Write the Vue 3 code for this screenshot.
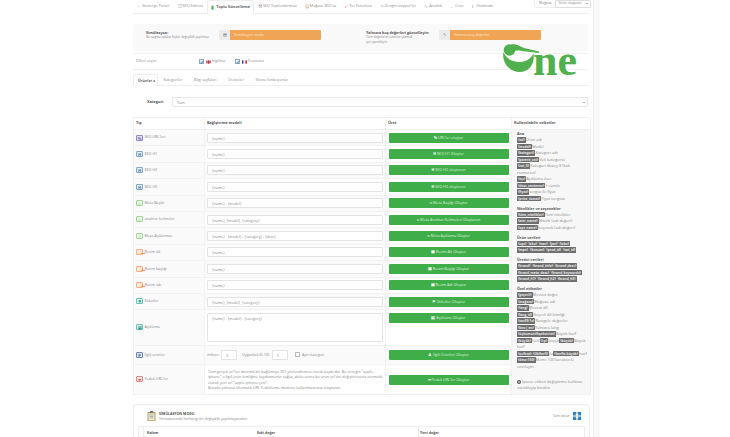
<script setup>
const navs = [
  { label: 'Gösterge Paneli', icon: '◔', color: '#c9a58a' },
  { label: 'SEO Editörü', icon: '☑', color: '#aab' },
  { label: 'Toplu Güncelleme', icon: '▮', color: '#58b050', active: true },
  { label: 'SEO Yapılandırması', icon: '⚒', color: '#999' },
  { label: "Mağaza SEO'su", icon: '▤', color: '#c9a58a' },
  { label: 'Yol Yöneticisi', icon: '➶', color: '#d98' },
  { label: 'Zengin snippet\'ler', icon: '✧', color: '#9ab' },
  { label: 'Analitik', icon: '∿', color: '#9a9' },
  { label: 'Cron', icon: '…', color: '#bbb' },
  { label: 'Hakkında', icon: 'ℹ', color: '#777' }
]
const subTabs = ['Kategoriler', 'Bilgi sayfaları', 'Üreticiler', 'Ekstra fonksiyonlar']
const rows = [
  { type: 'SEO URL\'leri', kind: 'purple', glyph: '%', value: '{name}', btn: "URL'ler oluştur", bi: '%' },
  { type: 'SEO H1', kind: 'blue', glyph: 'H', value: '{name}', btn: 'SEO H1 Oluştur', bi: 'H' },
  { type: 'SEO H2', kind: 'blue', glyph: 'H', value: '{name}', btn: 'SEO H2 oluşturun', bi: 'H' },
  { type: 'SEO H3', kind: 'blue', glyph: 'H', value: '{name}', btn: 'SEO H3 oluşturun', bi: 'H' },
  { type: 'Meta Başlık', kind: 'green', glyph: '‹›', value: '{name} - {model}', btn: 'Meta Başlığı Oluştur', bi: '‹›' },
  { type: 'anahtar kelimeler', kind: 'green', glyph: '‹›', value: '{name}, {model}, {category}', btn: 'Meta Anahtar Kelimeleri Oluşturun', bi: '‹›' },
  { type: 'Meta Açıklaması', kind: 'green', glyph: '‹›', value: '{name} - {model} - {category} - {desc}', btn: 'Meta Açıklama Oluştur', bi: '‹›' },
  { type: 'Resim alt', kind: 'orange', glyph: '▬', value: '{name}', btn: 'Resim Alt Oluştur', bi: '▣' },
  { type: 'Resim başlığı', kind: 'orange', glyph: '▬', value: '{name}', btn: 'Resim Başlığı Oluştur', bi: '▣' },
  { type: 'Resim adı', kind: 'orange', glyph: '▬', value: '{name}', btn: 'Resim Adı Oluştur', bi: '▣' },
  { type: 'Etiketler', kind: 'teal', glyph: '⚑', value: '{name}, {model}, {category}', btn: 'Etiketler Oluştur', bi: '⚑' }
]
const sections = [
  { title: 'Ana', lines: [
    [['{ad}', 'Ürün adı']], [['{model}', 'Model']], [['{kategori}', 'Kategori adı']], [['{parent_cat}', 'Veli kategorisi']],
    [['{cat_X}', 'Kategori düzey X (kök']], [['', 'numarası)']], [['{açı}', 'Açıklama ilacı']], [['{desc_sentence}', '1 cümle']],
    [['{fiyat}', 'vergisi ile fiyat']], [['{price_tomat}', 'Fiyat vergisiz']]
  ] },
  { title: 'Nitelikler ve seçenekler', lines: [
    [['{tüm_nitelikler}', 'Tüm nitelikler']], [['{attr_name}', 'Nitelik (adı değeri)']], [['{opt_name}', 'Seçenek (adı değeri)']]
  ] },
  { title: 'Ürün verileri', lines: [
    [['{upc}', ''], ['{sku}', ''], ['{ean}', ''], ['{jan}', ''], ['{isbn}', '']],
    [['{mpn}', ''], ['{konum}', ''], ['{prod_id}', ''], ['{cat_id}', '']]
  ] },
  { title: 'Üretici verileri', lines: [
    [['{brand}', ''], ['{brand_title}', ''], ['{brand_desc}', '']],
    [['{brand_meta_desc}', ''], ['{brand_keywords}', '']],
    [['{brand_h1}', ''], ['{brand_h2}', ''], ['{brand_h3}', '']]
  ] },
  { title: 'Özel etiketler', lines: [
    [['{geçerli}', 'Mevcut değer']], [['{mağaza}', 'Mağaza adı']], [['{lang}', 'Mevcut dil']], [['{lang_id}', 'Geçerli dil kimliği']],
    [['{sec99:1x}', 'Rastgele değerler']], [['{kes:|:en}', 'Yalnızca lang']], [['{üçkomut:ilkşekstrim}', 'Büyük harf']],
    [['{büyük}', 'harf'], ['{l:p}', 'küçük'], ['{küçük}', 'Büyük']], [['', 'harf']],
    [['{ucfirst}: {ilkHarfi}', 'ile'], ['{harfle-büyük}', 'harf']],
    [['{desc:100}', 'Metni 100 karakterle']], [['', 'sınırlayın']]
  ] }
]
</script>

<template>
  <div class="page">
    <main class="main">
      <nav class="nav">
        <a v-for="n in navs" :key="n.label" class="nav-item" :class="{ active: n.active }">
          <span class="nav-ico" :style="{ color: n.color }">{{ n.icon }}</span>{{ n.label }}
        </a>
      </nav>
      <div class="store">
        <span>Mağaza</span>
        <span class="store-select">Senin mağazan <i class="caret"></i></span>
      </div>

      <section class="panel">
        <div class="opt opt-a">
          <div class="opt-text"><b>Simülasyon:</b><small>Bu sağma ayakta hiçbir değişiklik yapılmaz</small></div>
          <div class="group"><span class="addon">▤</span><span class="orange">Simülasyon modu</span></div>
        </div>
        <div class="opt opt-b">
          <div class="opt-text"><b>Yalnızca boş değerleri güncelleyin:</b><small>Tüm değerlerin üzerine yazmak için işaretleyin</small></div>
          <div class="group"><span class="addon">✎</span><span class="orange">Yalnızca boş değerler</span></div>
        </div>
      </section>

      <div class="langs">
        <span class="langs-label">Dilleri seçin:</span>
        <label class="lang">
          <span class="check">✓</span>
          <svg class="flag" viewBox="0 0 6 4"><rect width="6" height="4" fill="#d9a0ae"/><path d="M0 2h6M3 0v4" stroke="#c8213a" stroke-width="1"/></svg>
          İngilizce
        </label>
        <label class="lang">
          <span class="check">✓</span>
          <svg class="flag" viewBox="0 0 6 4"><rect width="2" height="4" fill="#33509c"/><rect x="2" width="2" height="4" fill="#f4f4f4"/><rect x="4" width="2" height="4" fill="#d8333f"/></svg>
          Fransızca
        </label>
      </div>

      <div class="tabs">
        <a class="tab active">Ürünler s</a>
        <a v-for="t in subTabs" :key="t" class="tab">{{ t }}</a>
      </div>

      <div class="cat">
        <b>Kategori:</b>
        <div class="cat-select">Tüm<i class="caret"></i></div>
      </div>

      <table class="grid">
        <colgroup><col class="c1"><col class="c2"><col class="c3"><col class="c4"></colgroup>
        <thead>
          <tr><th>Tip</th><th>Bağlştırma modeli</th><th>Üret</th><th>Kullanılabilir etiketler</th></tr>
        </thead>
        <tbody>
          <tr v-for="(r, i) in rows" :key="r.type" class="row">
            <td class="type"><span class="ico" :class="r.kind">{{ r.glyph }}</span>{{ r.type }}</td>
            <td><div class="input">{{ r.value }}</div></td>
            <td><button class="gen"><span class="gen-ico">{{ r.bi }}</span> {{ r.btn }}</button></td>
            <td v-if="i === 0" rowspan="14" class="tags">
              <div v-for="s in sections" :key="s.title" class="tag-sec">
                <h5>{{ s.title }}</h5>
                <div v-for="(l, j) in s.lines" :key="j" class="tag-line">
                  <template v-for="(p, k) in l" :key="k">
                    <span v-if="p[0]" class="tag">{{ p[0] }}</span>
                    <span v-if="p[1]"> {{ p[1] }} </span>
                    <span v-else> </span>
                  </template>
                </div>
              </div>
              <p class="tip"><svg class="tip-ico" viewBox="0 0 4 4"><circle cx="2" cy="2" r="2" fill="#555"/><rect x="1.500" y="1" width="1" height="2" fill="#eee"/></svg> İpucu: etiketi değiştirme kalıbına<br>sürükleyip bırakın</p>
            </td>
          </tr>
          <tr class="row-desc">
            <td class="type"><span class="ico teal">▤</span>Açıklama</td>
            <td class="top"><div class="area">{name} - {model} - {category}</div></td>
            <td class="top"><button class="gen"><span class="gen-ico">▤</span> Açıklama Oluştur</button></td>
          </tr>
          <tr class="row-rel">
            <td class="type"><span class="ico navy">P</span>İlgili ürünler</td>
            <td>
              <div class="rel">
                miktar: <span class="mini">5</span>
                <span class="gap">Uygunluk (0-10): </span><span class="mini">5</span>
                <span class="box"></span> Aynı kategori
              </div>
            </td>
            <td><button class="gen"><span class="gen-ico">♟</span> İlgili Ürünleri Oluştur</button></td>
          </tr>
          <tr class="row-fall">
            <td class="type"><span class="ico red">➦</span>Yedek URL'ler</td>
            <td class="note">
              Tüm gerçek url'leri dinamik bir bağlantıya 301 yönlendirmesi olarak kaydedin. Bu örneğin "apple-iphone" u ilgili ürün kimliğine kaydetmenizi sağlar, daha sonra bu ürün url'sini değiştirirseniz otomatik olarak yeni url "apple-iphone-yeni".<br>
              Burada yalnızca Otomatik URL Yedekleme modunu kullanmazsanız oluşturun.
            </td>
            <td><button class="gen"><span class="gen-ico">➦</span> Yedek URL'ler Oluştur</button></td>
          </tr>
        </tbody>
      </table>

      <section class="sim">
        <header class="sim-head">
          <svg class="clip" viewBox="0 0 9 10"><rect x=".5" y="1" width="8" height="9" rx=".6" fill="#b79a63"/><rect x="1.5" y="2.4" width="6" height="6.8" fill="#eef1e6"/><rect x="3" y="0" width="3" height="2" fill="#6f7a5c"/><path d="M2.5 4h4M2.5 5.5h4M2.5 7h4" stroke="#7f8f6a" stroke-width=".6"/></svg>
          <div class="sim-text"><b>SİMÜLASYON MODU</b><small>Veritabanında herhangi bir değişiklik yapılmayacaktır.</small></div>
          <span class="full">Tam ekran</span>
          <svg class="full-ico" viewBox="0 0 8 8" fill="#2f80c0"><path d="M0 0h3.4v1.4L2.4 2.4 3.6 3.6H0zM8 0v3.6H4.4L5.6 2.4 4.6 1.4V0zM0 8V4.4h3.6L2.4 5.6l1 1V8zM8 8H4.6V6.6l1-1L4.4 4.4H8z"/></svg>
        </header>
        <div class="sim-table">
          <span class="sim-first"></span>
          <span class="sim-c1">Kalem</span>
          <span class="sim-c2">Eski değer</span>
          <span class="sim-c3">Yeni değer</span>
        </div>
      </section>

      <div class="logo" aria-label="One">
        <svg class="logo-o" viewBox="0 0 36 28" fill="#4fb04d">
          <circle cx="6.5" cy="6" r="5.8"/>
          <path d="M8 .6C14-.6 17 3 22 4.2L36 7.6V9L23 7.6C18 7 15 6 11.5 7Z"/>
          <path d="M.4 8C-1.400 20 8 28 16.500 28 26 28 32 20 30.500 9.500 28 14 24 18 16.500 18 9 18 3.500 15 .4 8Z"/>
        </svg>
        <span class="logo-t">ne</span>
      </div>
    </main>
    <aside class="gutter"></aside>
  </div>
</template>

<style>
html, body { margin: 0; height: 437px; overflow: hidden; background: #fff; }
</style>

<style scoped>
.page { display: flex; width: 730px; height: 437px; overflow: hidden; padding-left: 125px; box-sizing: border-box; font-family: "Open Sans", "Liberation Sans", sans-serif; font-size: 3.7px; line-height: 6.4px; color: #777; }
.main { position: relative; width: 469px; flex: none; padding: 0 5px 0 8px; box-sizing: border-box; border-right: 1px solid #f0f0f0; }
.gutter { width: 6px; background: #f8f8f8; }

.nav { display: flex; height: 13px; border-bottom: 1px solid #eee; box-sizing: content-box; }
.nav-item { display: flex; align-items: center; padding: 0 4px; white-space: nowrap; font-size: 3.750px; color: #8a8a8a; }
.nav-item.active { font-weight: 700; color: #666; background: #fff; border: 1px solid #eee; border-bottom: 0; border-radius: 3px 3px 0 0; height: 14px; padding: 0 3px; box-sizing: border-box; }
.nav-ico { width: 4px; margin-right: 1px; font-size: 4.500px; overflow: hidden; }

.store { position: absolute; top: 0; right: 2px; width: 57px; height: 8px; display: flex; align-items: center; gap: 3px; padding-left: 4px; box-sizing: border-box; border: 1px solid #eee; border-top: 0; border-right: 0; border-radius: 0 0 0 3px; background: #fff; color: #888; font-size: 3.6px; }
.store-select { flex: 1; height: 6px; line-height: 5px; border: 1px solid #ddd; border-radius: 1px; padding-left: 3px; position: relative; font-size: 3.2px; }

.caret { position: absolute; right: 2px; top: 2px; border: 1.300px solid transparent; border-top-color: #666; border-bottom: 0; }

.panel { display: flex; height: 27px; margin-top: 10px; width: 455px; background: #f9f9f9; border-radius: 3px; box-sizing: border-box; padding-left: 13px; }
.opt { display: flex; align-items: flex-start; padding-top: 5.500px; }
.opt-a { width: 220px; }
.opt-text { display: flex; flex-direction: column; width: 73px; padding-top: 1px; line-height: 4.600px; color: #888; }
.opt-text b { color: #555; font-size: 3.7px; white-space: nowrap; }
.opt-text small { font-size: 3.2px; }
.opt-b .opt-text small { width: 52px; }
.group { display: flex; height: 10px; width: 102px; border-radius: 1px; overflow: hidden; }
.addon { width: 11px; flex: none; background: #ececec; color: #555; text-align: center; line-height: 10px; font-size: 4px; }
.orange { flex: 1; background: #f0a556; color: #fbe6cb; line-height: 10px; padding-left: 4px; font-size: 3.6px; }

.langs { display: flex; align-items: center; height: 17px; margin-top: 2px; border-top: 1px solid #f0f0f0; border-bottom: 1px solid #f0f0f0; box-sizing: border-box; color: #888; }
.langs-label { width: 66px; padding-left: 3px; box-sizing: border-box; }
.lang { display: flex; align-items: center; width: 36px; white-space: nowrap; }
.check { width: 5px; height: 5px; margin-right: 2px; border: .5px solid #9ab; box-sizing: border-box; background: #dfeffa; color: #1670b5; font-size: 4.500px; line-height: 4px; text-align: center; font-weight: 700; }
.flag { width: 5px; height: 4px; margin-right: 1px; }

.tabs { display: flex; height: 16px; padding-top: 4px; box-sizing: border-box; border-bottom: 1px solid #eee; }
.tab { padding: 0 4.500px; line-height: 11px; color: #8a8a8a; white-space: nowrap; }
.tab + .tab { margin-left: 1px; margin-right: 1.700px; }
.tab.active { font-weight: 700; color: #666; border: 1px solid #eee; border-bottom: 0; border-radius: 3px 3px 0 0; height: 12px; background: #fff; padding: 0 4px; width: 25px; box-sizing: border-box; }

.cat { display: flex; align-items: center; height: 10px; margin-top: 11px; }
.cat b { width: 31px; text-align: right; margin-right: 8px; color: #555; flex: none; }
.cat-select { position: relative; flex: 1; height: 10px; line-height: 9px; padding-left: 4px; border: 1px solid #e8e8e8; box-sizing: border-box; border-radius: 1px; }
.cat-select .caret { top: 4px; }

.grid { width: 457px; margin-top: 10px; border-collapse: collapse; table-layout: fixed; }
.c1 { width: 71px; } .c2 { width: 181px; } .c3 { width: 126px; } .c4 { width: 79px; }
.grid th { height: 11px; padding: 0 2px; text-align: left; font-size: 3.8px; font-weight: 700; color: #555; border: 1px solid #f2f2f2; border-bottom: 1.500px solid #eee; }
.grid td { padding: 0 2px; border: 1px solid #f2f2f2; }
.row td, .row-rel td { background: #fff; }
.row:nth-child(odd) td:not(.tags), .row-rel td { background: #fafafa; }
.row { height: 16.400px; }
.row-desc { height: 35.600px; }
.row-rel { height: 19px; }
.row-fall { height: 30.500px; }
.type { white-space: nowrap; color: #888; background: #fafafa !important; }
.top { vertical-align: top; padding-top: 3px !important; }
.ico { display: inline-block; width: 7px; height: 6px; margin-right: 1.500px; vertical-align: middle; line-height: 5px; text-align: center; font-size: 4px; font-weight: 700; border: .7px solid; border-radius: 1px; box-sizing: border-box; }
.ico.purple { color: #6a5cb8; border-color: #9088c8; background: #e4e0f4; }
.ico.blue { color: #2d6fa0; border-color: #7fa8c8; background: #e2eef6; }
.ico.green { color: #9bc88a; border-color: #a6d496; background: #eef8e8; }
.ico.orange { color: #ef9a5c; border-color: #f0b088; background: #fde8d8; }
.ico.teal { color: #1c9a8a; border-color: #6cc0b4; background: #dff3ef; }
.ico.navy { color: #2b4d90; border-color: #6a82b4; background: #e3e9f5; }
.ico.red { color: #d8403c; border-color: #e08a88; background: #fbe6e5; }
.input { height: 10px; line-height: 9px; padding-left: 4px; border: 1px solid #e4e4e4; box-sizing: border-box; border-radius: 1px; background: #fff; color: #888; white-space: nowrap; overflow: hidden; }
.area { height: 28.500px; padding: 2px 4px; border: 1px solid #e4e4e4; box-sizing: border-box; border-radius: 1px; background: #fff; color: #888; }
.gen { display: block; width: 120px; height: 10px; margin: 0 auto; padding: 0; border: 0; background: #3fae49; color: #dff3df; font: inherit; font-size: 3.7px; line-height: 10px; text-align: center; white-space: nowrap; border-radius: 1px; }
.gen-ico { font-weight: 700; color: #fff; }
.rel { display: flex; align-items: center; white-space: nowrap; color: #888; }
.mini { width: 16px; height: 10px; line-height: 9px; margin-left: 2px; padding-left: 4px; border: 1px solid #e4e4e4; box-sizing: border-box; background: #fff; }
.gap { margin-left: 5px; }
.box { width: 5px; height: 5px; border: .7px solid #bbb; box-sizing: border-box; margin: 0 2px 0 7px; border-radius: .5px; }
.grid td.note { font-size: 3.700px; line-height: 5.500px; color: #888; white-space: normal; padding-left: 3px; padding-right: 0; }
.grid td.tags { vertical-align: top; padding: 1px 3px 0 5px; background: #f7f7f7; color: #888; font-size: 4px; line-height: 6.500px; }
.tag-sec { margin-bottom: 3.500px; }
.tag-sec h5 { margin: 0; font-size: 3.700px; font-weight: 700; color: #555; line-height: 6px; }
.tag-line { line-height: 6.500px; height: 6.500px; white-space: nowrap; }
.tag { display: inline-block; padding: 0 1px; height: 5.500px; line-height: 5.500px; background: #6e6e6e; color: #e8e8e8; font-size: 3.300px; font-weight: 700; border-radius: .6px; vertical-align: middle; white-space: nowrap; }
.tip { margin: 9px 0 0; line-height: 6px; }
.tip-ico { width: 4px; height: 4px; vertical-align: middle; }

.sim { margin-top: 9px; width: 457px; height: 60px; border: 1px solid #eee; border-radius: 3px; box-sizing: border-box; }
.sim-head { display: flex; align-items: center; height: 21px; padding: 0 8px 0 13px; }
.clip { width: 9px; height: 10px; margin-right: 3px; }
.sim-text { flex: 1; display: flex; flex-direction: column; line-height: 5px; }
.sim-text b { font-size: 3.500px; color: #555; }
.sim-text small { font-size: 3.600px; color: #888; }
.full { margin-right: 3px; font-size: 3.500px; color: #888; }
.full-ico { width: 8px; height: 8px; }
.sim-table { display: flex; height: 12px; margin: 0 4px; line-height: 11px; border: 1px solid #eee; box-sizing: border-box; font-weight: 700; font-size: 3.600px; color: #555; }
.sim-first { width: 4px; border-right: 1px solid #eee; }
.sim-c1 { width: 112px; padding-left: 3px; box-sizing: border-box; }
.sim-c2 { width: 163px; padding-left: 1px; box-sizing: border-box; border-right: 1px solid #eee; }
.sim-c3 { padding-left: 1px; }

.logo { position: absolute; left: 378px; top: 44px; width: 78px; height: 28px; }
.logo-o { position: absolute; left: 0; top: 0; width: 36px; height: 28px; }
.logo-t { position: absolute; left: 30px; top: 0; font-family: "Liberation Serif", serif; font-weight: 700; font-size: 44px; line-height: 34px; color: #4fb04d; }
</style>
